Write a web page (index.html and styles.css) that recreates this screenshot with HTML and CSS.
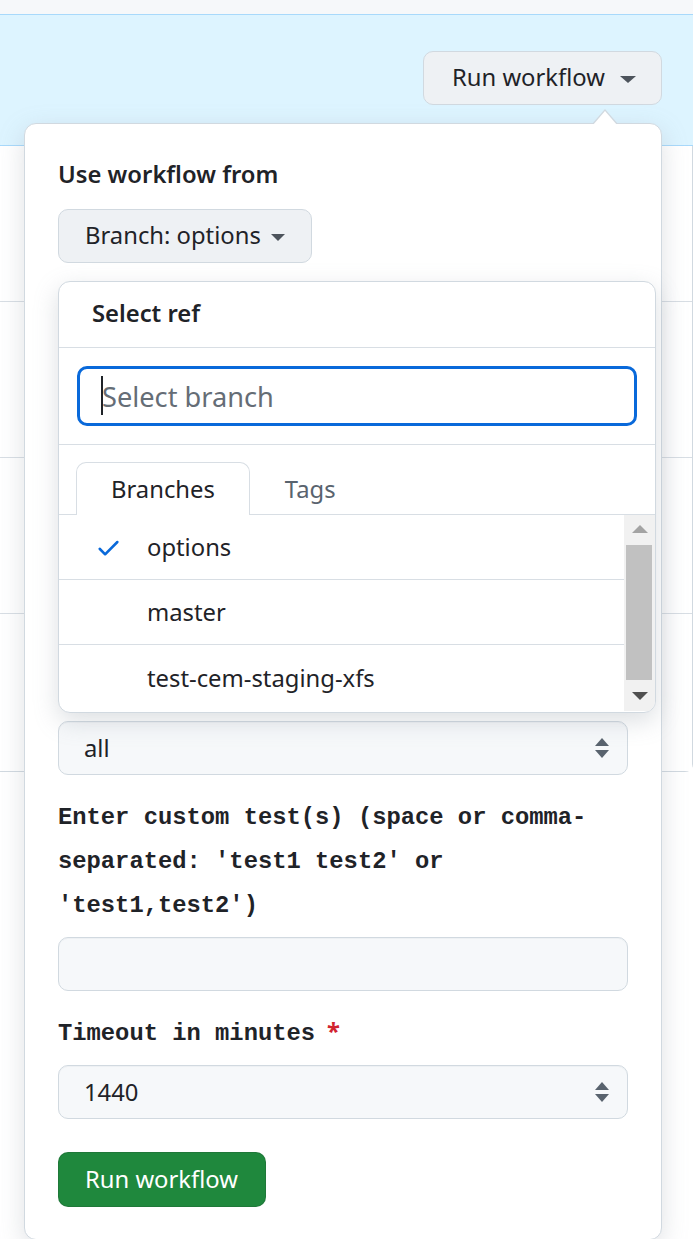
FILE: index.html
```html
<!DOCTYPE html>
<html lang="en">
<head>
<meta charset="utf-8">
<title>Run workflow</title>
<link rel="stylesheet" href="styles.css">
</head>
<body>
<div class="page">
  <div class="topbar"></div>
  <div class="banner">
    <button class="btn btn-run">Run workflow <span class="caret"></span></button>
  </div>
  <div class="runs">
    <div class="run-row"></div>
    <div class="run-row"></div>
    <div class="run-row"></div>
    <div class="run-row last"></div>
  </div>

  <div class="popover">
    <div class="popover-title">Use workflow from</div>
    <div class="branch-wrap">
      <button class="btn btn-branch">Branch: options <span class="caret small"></span></button>
      <div class="select-menu">
        <div class="menu-header">Select ref</div>
        <div class="menu-filter">
          <div class="filter-box">
            <input class="filter-input" type="text" placeholder="Select branch">
            <span class="text-caret"></span>
          </div>
        </div>
        <div class="menu-tabs">
          <div class="tab selected">Branches</div>
          <div class="tab">Tags</div>
        </div>
        <div class="menu-list">
          <div class="items">
            <div class="item">
              <svg class="check" viewBox="0 0 16 16" width="27" height="27"><path fill="#0969da" d="M13.78 4.22a.75.75 0 0 1 0 1.06l-7.25 7.25a.75.75 0 0 1-1.06 0L2.22 9.28a.751.751 0 0 1 .018-1.042.751.751 0 0 1 1.042-.018L6 10.94l6.72-6.72a.75.75 0 0 1 1.06 0Z"/></svg>
              <span>options</span>
            </div>
            <div class="item">
              <span class="check-space"></span>
              <span>master</span>
            </div>
            <div class="item last">
              <span class="check-space"></span>
              <span>test-cem-staging-xfs</span>
            </div>
          </div>
          <div class="scrollbar">
            <span class="sb-up"></span>
            <span class="sb-thumb"></span>
            <span class="sb-down"></span>
          </div>
        </div>
      </div>
    </div>

    <div class="field first-field">
      <div class="select-box">
        <span>all</span>
        <svg class="updown" viewBox="0 0 16 22" width="16" height="22"><path fill="#59636e" d="M8 1 L15 9 H1 Z M8 21 L1 13 H15 Z"/></svg>
      </div>
    </div>

    <div class="field">
      <label class="field-label">Enter custom test(s) (space or comma-separated: 'test1 test2' or 'test1,test2')</label>
      <div class="text-box"></div>
    </div>

    <div class="field">
      <label class="field-label">Timeout in minutes<span class="req">*</span></label>
      <div class="select-box">
        <span>1440</span>
        <svg class="updown" viewBox="0 0 16 22" width="16" height="22"><path fill="#59636e" d="M8 1 L15 9 H1 Z M8 21 L1 13 H15 Z"/></svg>
      </div>
    </div>

    <button class="btn btn-primary">Run workflow</button>
  </div>
</div>
</body>
</html>
```

FILE: styles.css
```css
* { box-sizing: border-box; }

html, body {
  margin: 0;
  padding: 0;
  background: #ffffff;
}

body {
  font-family: "Noto Sans", "Liberation Sans", sans-serif;
  font-size: 23.8px;
  color: #1f2328;
  overflow: hidden;
}

.page {
  position: relative;
  width: 693px;
  height: 1239px;
  overflow: hidden;
}

.topbar {
  height: 14px;
  background: #f6f8fa;
}

.banner {
  display: flex;
  justify-content: flex-end;
  padding: 36px 31px 40px 0;
  background: #ddf4ff;
  border-top: 1px solid #a8d9fb;
  border-bottom: 1px solid #a8d9fb;
}

.btn {
  font-family: "Noto Sans", "Liberation Sans", sans-serif;
  font-size: 23.8px;
  line-height: 1;
  display: inline-flex;
  align-items: center;
  border: 1px solid #d1d9e0;
  border-radius: 10px;
  background: #f6f8fa;
  color: #1f2328;
  cursor: pointer;
}

.btn-run {
  height: 54px;
  padding: 0 25px 0 28px;
  background: #eef1f4;
  gap: 15px;
}

.caret {
  display: inline-block;
  width: 0;
  height: 0;
  border-left: 8px solid transparent;
  border-right: 8px solid transparent;
  border-top: 7px solid #4d545c;
  margin-top: 3px;
}

.caret.small {
  border-left-width: 7px;
  border-right-width: 7px;
  border-top-width: 7px;
}

.runs {
  margin-left: -10px;
  width: 703px;
  border-right: 1px solid #d1d9e0;
  border-bottom: 1px solid #d1d9e0;
  border-bottom-right-radius: 8px;
}

.run-row {
  height: 156px;
  border-bottom: 1px solid #d8dee4;
  background: #ffffff;
}

.run-row.last {
  height: 157px;
  border-bottom: none;
}

/* Popover overlay */
.popover {
  position: absolute;
  top: 123px;
  left: 24px;
  width: 638px;
  padding: 32px 33px 32px 33px;
  background: #ffffff;
  border: 1px solid #d1d9e0;
  border-radius: 12px;
  box-shadow: 0 8px 26px rgba(140, 149, 159, 0.28);
}

.popover::before,
.popover::after {
  content: "";
  position: absolute;
  width: 0;
  height: 0;
  border-left: 13px solid transparent;
  border-right: 13px solid transparent;
}

.popover::before {
  top: -15px;
  right: 43px;
  border-bottom: 15px solid #d1d9e0;
}

.popover::after {
  top: -13px;
  right: 44px;
  border-left-width: 12px;
  border-right-width: 12px;
  border-bottom: 14px solid #ffffff;
}

.popover-title {
  font-weight: 600;
  line-height: 36px;
  height: 36px;
}

.branch-wrap {
  position: relative;
  margin-top: 17px;
}

.btn-branch {
  height: 54px;
  padding: 0 26px 0 26px;
  background: #eef1f4;
  gap: 10px;
}

/* Select menu overlay */
.select-menu {
  position: absolute;
  top: 72px;
  left: 0;
  width: 598px;
  height: 432px;
  background: #ffffff;
  border: 1px solid #d1d9e0;
  border-radius: 12px;
  box-shadow: 0 8px 24px rgba(140, 149, 159, 0.3);
  overflow: hidden;
  z-index: 2;
}

.menu-header {
  height: 66px;
  display: flex;
  align-items: center;
  padding: 0 0 3px 33px;
  font-weight: 600;
  border-bottom: 1px solid #d8dee4;
}

.menu-filter {
  padding: 18px 18px 18px 18px;
  border-bottom: 1px solid #d8dee4;
}

.filter-box {
  position: relative;
}

.filter-input {
  display: block;
  width: 100%;
  height: 60px;
  padding: 0 22px;
  font-family: "Noto Sans", "Liberation Sans", sans-serif;
  font-size: 27.2px;
  color: #1f2328;
  border: 3px solid #0969da;
  border-radius: 10px;
  outline: none;
  background: #ffffff;
  caret-color: transparent;
}

.filter-input::placeholder {
  color: #656d76;
}

.text-caret {
  position: absolute;
  left: 24px;
  top: 10px;
  width: 2px;
  height: 39px;
  background: #1f2328;
}

.menu-tabs {
  display: flex;
  padding: 17px 0 0 17px;
  border-bottom: 1px solid #d8dee4;
}

.tab {
  height: 52px;
  padding: 0 34px;
  display: flex;
  align-items: center;
  color: #59636e;
  border: 1px solid transparent;
  border-bottom: none;
  margin-bottom: -1px;
}

.tab.selected {
  color: #1f2328;
  background: #ffffff;
  border-color: #d8dee4;
  border-top-left-radius: 10px;
  border-top-right-radius: 10px;
  height: 53px;
}

.menu-list {
  display: flex;
  height: 196px;
}

.items {
  flex: 1;
}

.item {
  height: 65px;
  display: flex;
  align-items: center;
  gap: 25px;
  padding-left: 36px;
  border-bottom: 1px solid #d8dee4;
}

.item.last {
  border-bottom: none;
}

.check, .check-space {
  display: block;
  width: 27px;
  height: 27px;
  flex: none;
}

.scrollbar {
  position: relative;
  width: 31px;
  background: #f1f1f1;
}

.sb-up, .sb-down {
  position: absolute;
  left: 8px;
  width: 0;
  height: 0;
  border-left: 8px solid transparent;
  border-right: 8px solid transparent;
}

.sb-up {
  top: 10px;
  border-bottom: 8px solid #a3a3a3;
}

.sb-down {
  bottom: 11px;
  border-top: 8px solid #505050;
}

.sb-thumb {
  position: absolute;
  left: 2px;
  right: 3px;
  top: 30px;
  height: 135px;
  background: #c1c1c1;
}

/* Form fields */
.field {
  margin-top: 21px;
}

.first-field {
  margin-top: 458px;
}

.field-label {
  display: block;
  font-family: "Liberation Mono", "DejaVu Sans Mono", monospace;
  font-weight: 700;
  font-size: 23.8px;
  line-height: 44px;
  margin-bottom: 9px;
  color: #1f2328;
}

.req {
  font-family: "Noto Sans", sans-serif;
  color: #d1242f;
  margin-left: 12px;
  line-height: 0;
}

.select-box,
.text-box {
  height: 54px;
  background: #f6f8fa;
  border: 1px solid #d1d9e0;
  border-radius: 10px;
  box-shadow: inset 0 1px 0 rgba(208, 215, 222, 0.2);
}

.select-box {
  display: flex;
  align-items: center;
  justify-content: space-between;
  padding: 0 17px 0 25px;
}

.updown {
  width: 16px;
  height: 22px;
}

.btn-primary {
  margin-top: 33px;
  height: 55px;
  padding: 0 27px 0 26px;
  background: #1f883d;
  color: #ffffff;
  border-color: rgba(31, 35, 40, 0.15);
}
```
